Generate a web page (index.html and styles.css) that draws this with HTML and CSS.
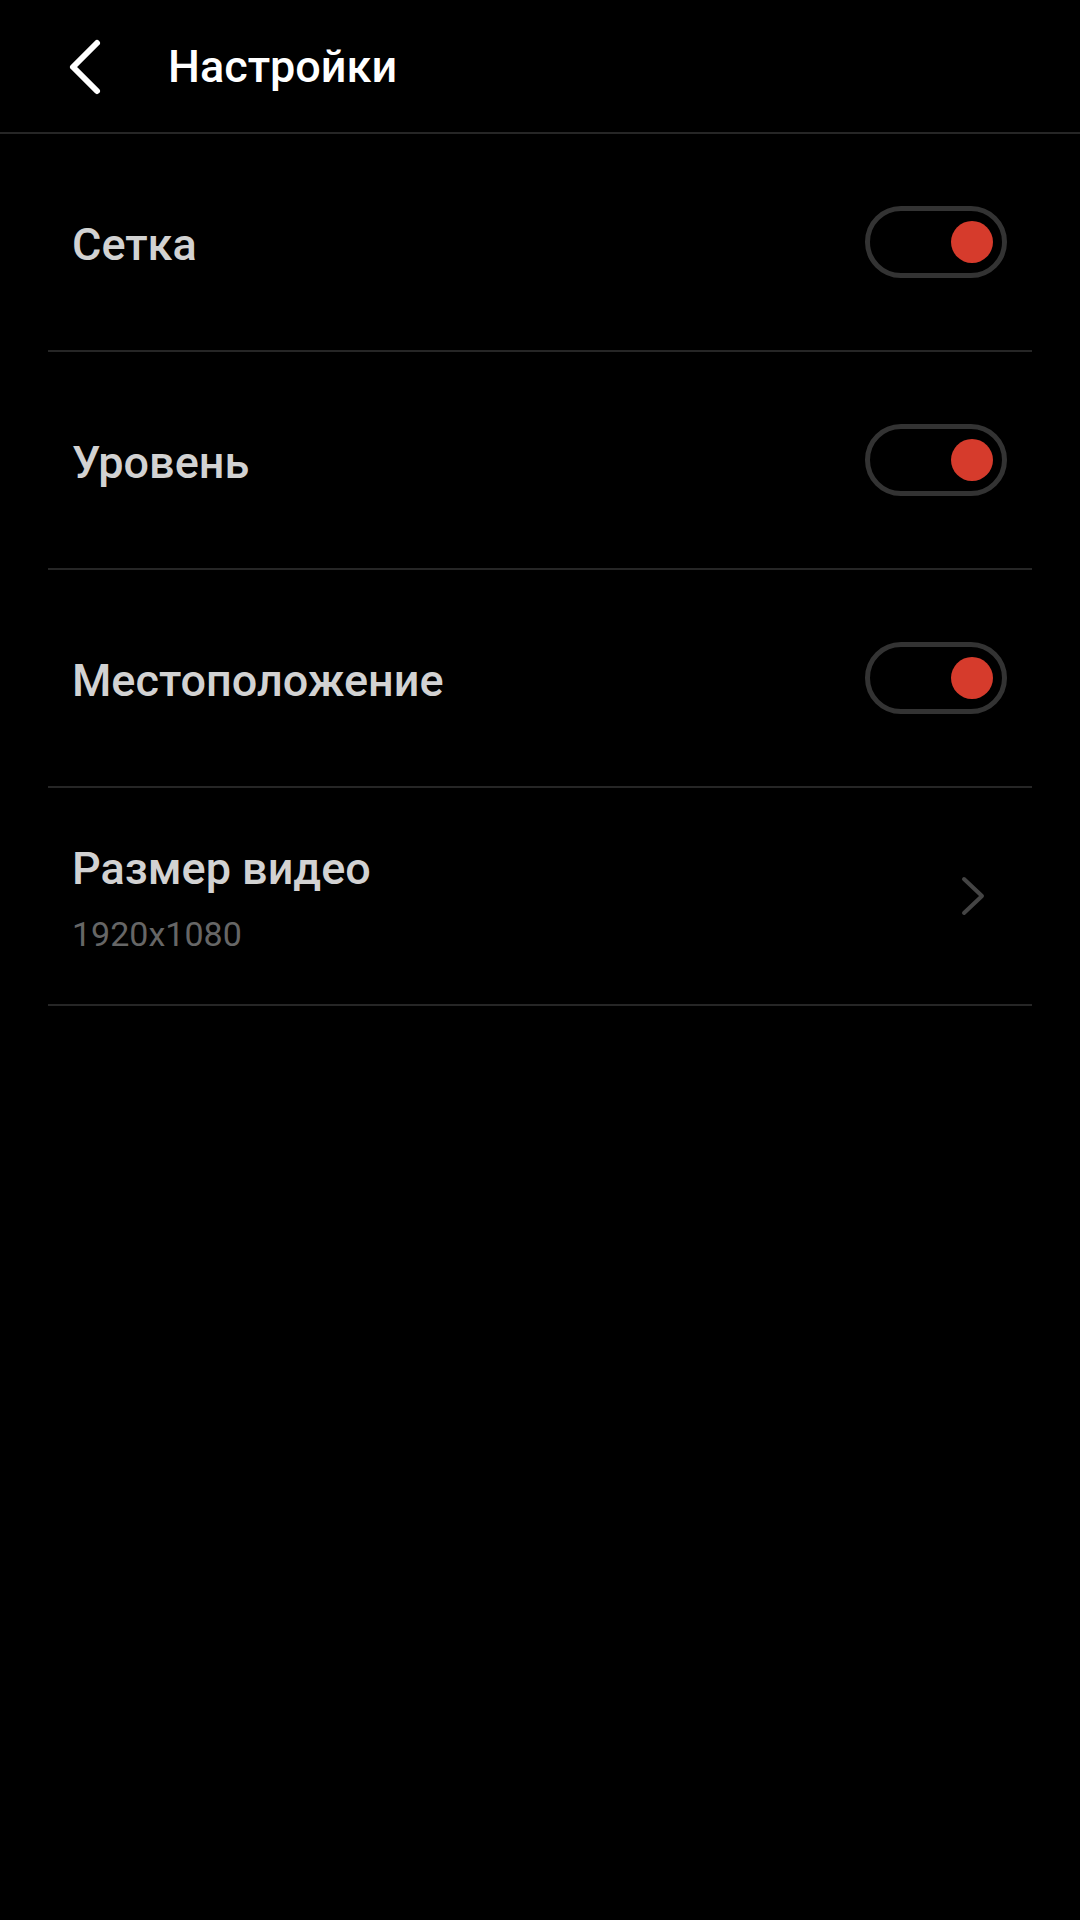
FILE: index.html
```
<!DOCTYPE html>
<html lang="ru">
<head>
    <meta charset="UTF-8">
    <title>Настройки</title>
    <link rel="stylesheet" href="styles.css">
</head>
<body>
    <div class="header">
        <svg class="back" width="48" height="60" viewBox="0 0 48 60">
            <path d="M30 6 L6 30 L30 54" fill="none" stroke="#fff" stroke-width="6" stroke-linecap="round" stroke-linejoin="round"/>
        </svg>
        <h1>Настройки</h1>
    </div>

    <div class="list">
        <div class="row">
            <span class="label">Сетка</span>
            <div class="toggle on"><div class="knob"></div></div>
        </div>
        <div class="row">
            <span class="label">Уровень</span>
            <div class="toggle on"><div class="knob"></div></div>
        </div>
        <div class="row">
            <span class="label">Местоположение</span>
            <div class="toggle on"><div class="knob"></div></div>
        </div>
        <div class="row">
            <div class="text">
                <span class="label">Размер видео</span>
                <span class="sub">1920x1080</span>
            </div>
            <svg class="chevron" width="24" height="40" viewBox="0 0 24 40">
                <path d="M3 3 L21 20 L3 37" fill="none" stroke="#444" stroke-width="4" stroke-linecap="round" stroke-linejoin="round"/>
            </svg>
        </div>
    </div>
</body>
</html>
```

FILE: styles.css
```
body {
    margin: 0;
    background-color: #000;
    color: #fff;
    font-family: Roboto, "Noto Sans", sans-serif;
}

.header {
    display: flex;
    align-items: center;
    border-bottom: 2px solid #262626;
    box-sizing: border-box;
    height: 134px;
}

.back {
    margin-left: 67px;
    margin-top: 2px;
}

.header h1 {
    margin: 0 0 0 53px;
    font-size: 45px;
    font-weight: 500;
    color: #fff;
}

.list {
    margin: 0 48px;
}

.row {
    height: 216px;
    display: flex;
    align-items: center;
    justify-content: space-between;
    padding: 0 25px 0 24px;
    border-bottom: 2px solid #262626;
}

.label {
    font-size: 45px;
    font-weight: 500;
    color: #d2d2d2;
    line-height: 52px;
}

.row > .label {
    margin-top: 5px;
}

.text {
    display: flex;
    flex-direction: column;
    gap: 19px;
    margin-top: 4px;
}

.sub {
    font-size: 34px;
    line-height: 40px;
    color: #666;
}

.toggle {
    width: 142px;
    height: 72px;
    box-sizing: border-box;
    border: 5px solid #333;
    border-radius: 36px;
    display: flex;
    align-items: center;
    justify-content: flex-end;
    padding-right: 9px;
}

.knob {
    width: 42px;
    height: 42px;
    border-radius: 50%;
    background-color: #d63b2c;
}

.chevron {
    margin-right: 22px;
}
```
